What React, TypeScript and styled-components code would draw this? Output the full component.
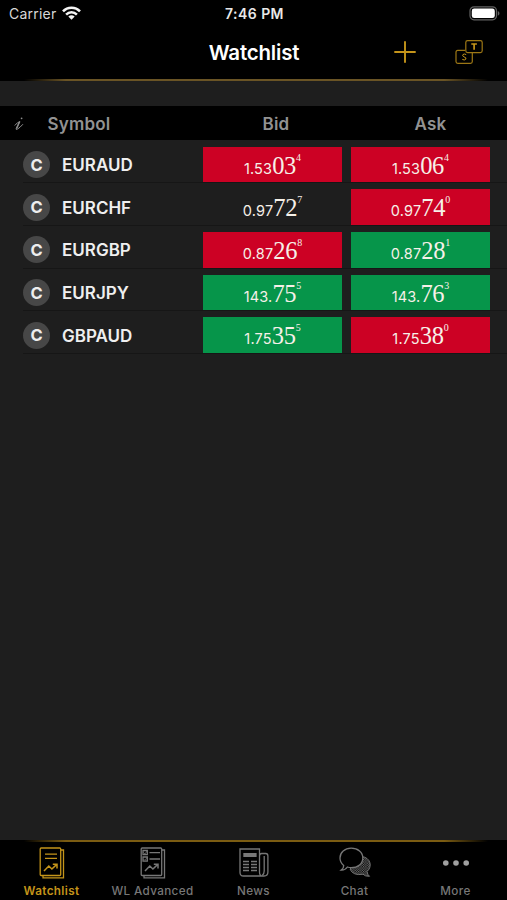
import React from "react";
import styled, { createGlobalStyle } from "styled-components";

const GOLD = "#c4941a";

const GlobalStyle = createGlobalStyle`
  body { margin: 0; background: #1e1e1e; }
  * { box-sizing: border-box; }
`;

const Screen = styled.div`
  display: flex;
  flex-direction: column;
  width: 507px;
  height: 900px;
  overflow: hidden;
  background: #1e1e1e;
  color: #fff;
  font-family: Inter, "Liberation Sans", sans-serif;
`;

const StatusBar = styled.div`
  display: grid;
  grid-template-columns: 1fr auto 1fr;
  align-items: center;
  flex: none;
  height: 27px;
  padding: 0 7px 0 9px;
  background: #000;
  font-size: 14px;
  line-height: 27px;
`;

const Carrier = styled.div`
  display: flex;
  align-items: center;
  gap: 6px;
  color: #d8d8d8;
  letter-spacing: 0.22px;
  svg { margin-bottom: 2px; }
`;

const Clock = styled.div`
  color: #e8e8e8;
  font-weight: 600;
  font-size: 14px;
  letter-spacing: 0.45px;
`;

const BatterySlot = styled.div`
  display: flex;
  justify-content: flex-end;
`;

const NavBar = styled.header`
  display: grid;
  grid-template-columns: 1fr auto 1fr;
  align-items: center;
  flex: none;
  height: 52px;
  background: #000;
`;

const Title = styled.h1`
  grid-column: 2;
  margin: 0;
  padding-left: 1px;
  font-size: 20.5px;
  font-weight: 600;
  letter-spacing: -0.2px;
  line-height: 50px;
`;

const NavActions = styled.div`
  display: flex;
  align-items: center;
  justify-content: flex-end;
  gap: 39px;
  padding-right: 24px;
  padding-bottom: 2px;
`;

const GoldRule = styled.div<{ $color: string }>`
  flex: none;
  height: 2px;
  background: linear-gradient(90deg, transparent 24px, ${(p) => p.$color} 66px, ${(p) => p.$color} 444px, transparent 488px), #000;
`;

const HeaderRow = styled.div`
  display: grid;
  grid-template-columns: 47.5px 155.5px 146px 1fr;
  align-items: center;
  flex: none;
  height: 34px;
  margin-top: 25px;
  padding-top: 1px;
  background: #000;
  color: #929292;
  font-size: 17px;
  font-weight: 600;
  letter-spacing: 0.2px;
`;

const HeaderLabel = styled.div<{ $center?: boolean }>`
  text-align: ${(p) => (p.$center ? "center" : "left")};
  &:last-child { padding-left: 5px; }
`;

const InfoSlot = styled.div`
  display: flex;
  padding-left: 14px;
`;

const List = styled.div`
  display: flex;
  flex-direction: column;
  flex: 1;
  padding-top: 0.7px;
`;

const Row = styled.div`
  display: grid;
  grid-template-columns: 39px 141px 139px 139px;
  align-items: center;
  height: 42.7px;
  margin-left: 23px;
  padding-top: 6px;
  border-bottom: 1px solid #161616;
`;

const Badge = styled.div`
  display: flex;
  align-items: center;
  justify-content: center;
  width: 27px;
  height: 27px;
  border-radius: 50%;
  background: #474747;
  color: #eee;
  font-size: 16.5px;
  font-weight: 700;
`;

const Symbol = styled.div`
  padding-top: 1px;
  color: #efefef;
  font-size: 17px;
  font-weight: 600;
`;

type Tone = "up" | "down" | "flat";
const toneColors: Record<Tone, string> = { up: "#06954a", down: "#cc0124", flat: "transparent" };

const PriceCell = styled.div<{ $tone: Tone; $ask?: boolean }>`
  display: flex;
  align-items: baseline;
  justify-content: center;
  height: 35.7px;
  margin-left: ${(p) => (p.$ask ? "9px" : "0")};
  margin-right: ${(p) => (p.$ask ? "-9px" : "0")};
  background: ${(p) => toneColors[p.$tone]};
  color: #f6f0e8;
  line-height: 37px;
`;

const PriceLead = styled.span`
  font-size: 14.5px;
  letter-spacing: 0.15px;
`;

const PricePips = styled.span`
  font-family: "Liberation Serif", serif;
  font-size: 24.5px;
  letter-spacing: -0.3px;
`;

const PricePoint = styled.span`
  align-self: flex-start;
  font-family: "Liberation Serif", serif;
  font-size: 10px;
  line-height: 21px;
`;

const TabBar = styled.nav`
  display: grid;
  grid-template-columns: repeat(5, 101px);
  justify-content: center;
  flex: none;
  height: 58px;
  background: #000;
`;

const Tab = styled.div<{ $active?: boolean }>`
  display: flex;
  flex-direction: column;
  align-items: center;
  padding-top: 5px;
  color: ${(p) => (p.$active ? GOLD : "#777")};
  font-weight: ${(p) => (p.$active ? 600 : 500)};
  svg { display: block; }
`;

const TabLabel = styled.span`
  margin-top: 5px;
  font-size: 11.7px;
  line-height: 15px;
  letter-spacing: 0.35px;
  white-space: nowrap;
`;

const WifiIcon = () => (
  <svg width="19" height="14" viewBox="0 0 19 14" fill="none" stroke="#f4f4f4" strokeWidth="2.5">
    <path d="M1 5.4C5.5 .4 13.5 .4 18 5.4" />
    <path d="M4.1 8.7C7.2 5.5 11.8 5.5 14.9 8.7" />
    <path d="M9.5 13.8 6.3 10.6Q9.5 7.9 12.7 10.6Z" fill="#f4f4f4" stroke="none" />
  </svg>
);

const BatteryIcon = () => (
  <svg width="31" height="15" viewBox="0 0 31 15">
    <rect x="1" y=".8" width="26.5" height="13" rx="4" fill="none" stroke="#626262" strokeWidth="1.2" />
    <rect x="2.8" y="2.5" width="23" height="9.6" rx="2.4" fill="#fff" />
    <path d="M28.8 5c2.2 1 2.2 3.8 0 4.8z" fill="#626262" />
  </svg>
);

const PlusIcon = () => (
  <svg width="22" height="22" viewBox="0 0 22 22" stroke={GOLD} strokeWidth="1.9">
    <path d="M11 .3v21.4M.3 11h21.4" />
  </svg>
);

const SwapIcon = () => (
  <svg width="28" height="25" viewBox="0 0 28 25" fill="none" stroke="#9d7715" strokeWidth="1.2">
    <g transform="translate(0 -1)">
      <path d="M10 11.4H2.8Q1 11.4 1 13.2v9.4q0 1.8 1.8 1.8h12.7q1.8 0 1.8-1.8V14" />
      <rect x="10.8" y="1.6" width="16.4" height="12" rx="1.8" />
      <path d="M16.3 5h5.6M19.1 5v5.7" stroke={GOLD} strokeWidth="1.7" />
      <path d="M11.2 15.6Q9.4 14.5 8 15.5q-1.1 1.5.9 2.3 2.7.8 2 2.3-1.4 1.6-3.6.3" stroke={GOLD} strokeWidth="1" />
    </g>
  </svg>
);

const ScriptI = () => (
  <svg width="11" height="16" viewBox="0 0 11 16" fill="none" stroke="#8c8c8c" strokeLinecap="round">
    <path d="M1 9.2Q3.6 6 5.7 5.7 3.2 10.5 2.2 12.5 1.7 14.2 3.6 13 6.1 11.5 8.7 8.5" strokeWidth="1" />
    <path d="M5.5 6 2.8 12" strokeWidth="1.5" />
    <circle cx="7.6" cy="2.3" r=".9" fill="#8c8c8c" stroke="none" />
  </svg>
);

const ReportIcon = ({ detailed = false }: { detailed?: boolean }) => (
  <svg width="26" height="32" viewBox="0 0 26 32" fill="none" stroke="currentColor" strokeWidth="1.3">
    <rect x="1.2" y="1" width="20.5" height="27.5" rx="1" />
    <path d="M22 3h2.5v27.8H4v-2" />
    {detailed ? (
      <>
        <path d="M3 3.5h4.3v4.2H3zM3 10h4.3v4.2H3zM9.5 5.7H20M9.5 12H20" />
        <path d="M3.5 5.5 5 7l2-3M3.5 12 5 13.5l2-3" strokeWidth=".7" />
      </>
    ) : (
      <path d="M6 7.2h12M6 11.3h12" />
    )}
    <path d="m5 24 4.8-5 3.1 3 4.6-4.4M13.8 17.3H18V21.5" strokeWidth="1.5" />
  </svg>
);

const NewsIcon = () => (
  <svg width="30" height="32" viewBox="0 0 30 32" fill="none" stroke="currentColor" strokeWidth="1.3">
    <path d="M20.5 25V2H1v23.5Q1 29 4.5 29H25q3.9 0 3.9-4V9q0-2.5-2.2-2.5h-4q-2.2 0-2.2 2.5v16q0 4 3 4" />
    <path d="M25.2 9v15q0 3-2 4.5" />
    <rect x="4.3" y="6" width="13.3" height="4" fill="currentColor" stroke="none" />
    <path d="M4 14.5h6M4 17.5h6M4 20.5h6M4 23.5h6M12 14.5h6M12 17.5h6M12 20.5h6M12 23.5h6" strokeWidth="1.7" />
  </svg>
);

const ChatIcon = () => (
  <svg width="32" height="32" viewBox="0 0 32 32" fill="none" stroke="currentColor" strokeWidth="1.3">
    <defs>
      <pattern id="chatDots" width="2.4" height="2.4" patternUnits="userSpaceOnUse">
        <path d="M0 0h1.1v1.1H0zM1.2 1.2h1.1v1.1H1.2z" fill="currentColor" stroke="none" />
      </pattern>
    </defs>
    <path d="M22.5 9.5C32 10.5 33.5 20 28 24.5Q28.5 28 30.5 29.3 26 29.5 24 27.2 14 29 11 22Z" fill="url(#chatDots)" strokeWidth="1" />
    <path d="M12.2 1.2C5.7 1.2 1 5.3 1 11q0 4.6 3.7 7.4.1 2.9-2.5 4.7 4 .2 6.2-3.1 1.8.6 3.8.6c6.7 0 11.6-4 11.6-9.7s-4.9-9.7-11.6-9.7Z" fill="#000" />
  </svg>
);

const MoreIcon = () => (
  <svg width="28" height="32" viewBox="0 0 28 32" fill="#a0a0a0">
    <circle cx="3.8" cy="16" r="2.8" />
    <circle cx="14" cy="16" r="2.8" />
    <circle cx="24.2" cy="16" r="2.8" />
  </svg>
);

interface Quote {
  lead: string;
  pips: string;
  point: string;
  tone: Tone;
}

const q = (lead: string, pips: string, point: string, tone: Tone): Quote => ({ lead, pips, point, tone });

const rows = [
  { symbol: "EURAUD", bid: q("1.53", "03", "4", "down"), ask: q("1.53", "06", "4", "down") },
  { symbol: "EURCHF", bid: q("0.97", "72", "7", "flat"), ask: q("0.97", "74", "0", "down") },
  { symbol: "EURGBP", bid: q("0.87", "26", "8", "down"), ask: q("0.87", "28", "1", "up") },
  { symbol: "EURJPY", bid: q("143.", "75", "5", "up"), ask: q("143.", "76", "3", "up") },
  { symbol: "GBPAUD", bid: q("1.75", "35", "5", "up"), ask: q("1.75", "38", "0", "down") },
];

const Price = ({ quote, ask }: { quote: Quote; ask?: boolean }) => (
  <PriceCell $tone={quote.tone} $ask={ask}>
    <PriceLead>{quote.lead}</PriceLead>
    <PricePips>{quote.pips}</PricePips>
    <PricePoint>{quote.point}</PricePoint>
  </PriceCell>
);

const tabs = [
  { label: "Watchlist", icon: <ReportIcon />, active: true },
  { label: "WL Advanced", icon: <ReportIcon detailed /> },
  { label: "News", icon: <NewsIcon /> },
  { label: "Chat", icon: <ChatIcon /> },
  { label: "More", icon: <MoreIcon /> },
];

export default function App() {
  return (
    <Screen>
      <GlobalStyle />
      <StatusBar>
        <Carrier>Carrier <WifiIcon /></Carrier>
        <Clock>7:46 PM</Clock>
        <BatterySlot><BatteryIcon /></BatterySlot>
      </StatusBar>
      <NavBar>
        <Title>Watchlist</Title>
        <NavActions>
          <PlusIcon />
          <SwapIcon />
        </NavActions>
      </NavBar>
      <GoldRule $color="#6a5425" />
      <HeaderRow>
        <InfoSlot><ScriptI /></InfoSlot>
        <HeaderLabel>Symbol</HeaderLabel>
        <HeaderLabel $center>Bid</HeaderLabel>
        <HeaderLabel $center>Ask</HeaderLabel>
      </HeaderRow>
      <List>
        {rows.map((r) => (
          <Row key={r.symbol}>
            <Badge>C</Badge>
            <Symbol>{r.symbol}</Symbol>
            <Price quote={r.bid} />
            <Price quote={r.ask} ask />
          </Row>
        ))}
      </List>
      <GoldRule $color="#7b5c12" />
      <TabBar>
        {tabs.map((t) => (
          <Tab key={t.label} $active={t.active}>
            {t.icon}
            <TabLabel>{t.label}</TabLabel>
          </Tab>
        ))}
      </TabBar>
    </Screen>
  );
}
